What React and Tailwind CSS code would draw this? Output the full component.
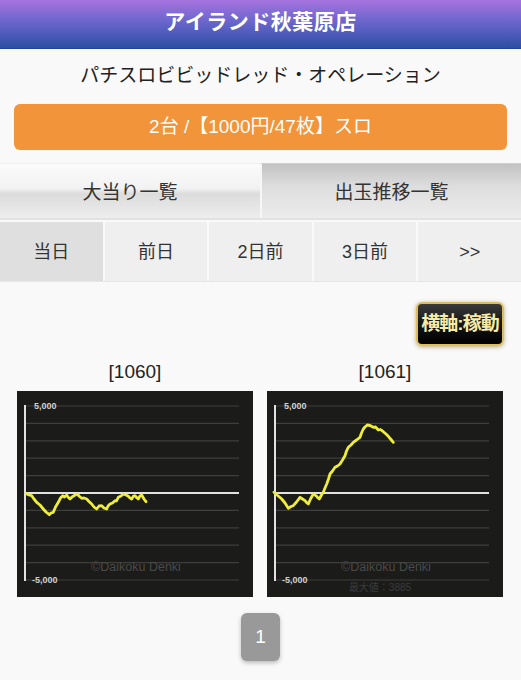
import React from "react";

const FONT = { fontFamily: '"Liberation Sans", "Noto Sans CJK JP", sans-serif' };

const leftPts = [
  [9, 102.5], [12, 104], [14.7, 104.7], [17, 108], [19.7, 111.3], [23, 114], [26.3, 118], [29, 121], [32.3, 123.7],
  [34, 122], [36.3, 121.3], [38.5, 116], [41.3, 111.3], [43.5, 107], [45.7, 104.7], [47.5, 106], [49.7, 104],
  [51, 106], [53, 108], [55, 106], [57, 104.7], [59, 103.5], [60.3, 103], [62, 105], [64.7, 107.3], [67, 107],
  [69.7, 108], [72, 110.5], [74.7, 113], [77, 116], [79.7, 118], [82, 115], [84.7, 114.7], [87, 117], [89.7, 118],
  [91, 115], [93, 113], [95.5, 112], [98, 109.7], [99.5, 110], [101.3, 106.3], [104, 105], [106.3, 103],
  [109, 104], [111.3, 105.3], [113, 107], [114.7, 108], [116.5, 105], [118, 104.7], [120, 107], [121.3, 108],
  [123, 105], [124.7, 104], [127, 108], [129, 110.7],
];

const rightPts = [
  [7, 101.3], [10, 104], [12.5, 106], [14.7, 108], [18, 112], [21.3, 117.3], [24, 115.5], [26.3, 114.7],
  [29.5, 111], [33, 106.3], [35.5, 108], [38, 109.7], [40, 112], [41.3, 113], [43.5, 108], [46.3, 103],
  [48, 104], [49.7, 105.3], [51, 107], [52.3, 108], [54.5, 104], [56.3, 101.3], [58, 97], [59.7, 93],
  [61.5, 88], [63, 83], [65.5, 80], [68, 76.3], [70.5, 75], [73, 73], [75.5, 69], [78, 64.7], [79.5, 60],
  [81.3, 56.3], [84, 54], [86.3, 51.3], [89.5, 49], [93, 46.3], [94.5, 42], [96.3, 38], [98, 36], [100.3, 34],
  [103, 34.5], [106.3, 36.3], [108.5, 36], [111.3, 39], [113.5, 38.5], [116.3, 40.7], [119, 43], [121.3, 45.3],
  [124, 48.5], [126.3, 51.3],
];

function toPath(pts) {
  return pts.map((p, i) => `${i === 0 ? "M" : "L"}${p[0]},${p[1]}`).join(" ");
}

function Chart({ pts, showMax }) {
  const gridYs = [];
  for (let i = 0; i <= 10; i++) gridYs.push(15 + i * 17.4);
  return (
    <svg width="236" height="206" viewBox="0 0 236 206" className="block">
      <rect x="0" y="0" width="236" height="206" fill="#1b1b1a" />
      {gridYs.map((y, i) =>
        i === 5 ? null : (
          <line key={i} x1="8" x2="222" y1={y} y2={y} stroke="#3e3e3c" strokeWidth="1.2" />
        )
      )}
      <line x1="8" x2="222" y1="102" y2="102" stroke="#e2e2e2" strokeWidth="2" />
      <line x1="8" x2="8" y1="14" y2="190" stroke="#e2e2e2" strokeWidth="2" />
      <text x="17" y="18" fontSize="9" fill="#d0d0d0" fontWeight="bold" style={FONT}>5,000</text>
      <text x="15" y="192" fontSize="9" fill="#d0d0d0" fontWeight="bold" style={FONT}>-5,000</text>
      <text x="119" y="180" fontSize="12.5" fill="#4a4a48" textAnchor="middle" style={FONT}>©Daikoku Denki</text>
      {showMax && (
        <text x="113" y="200" fontSize="10" fill="#3c3c3a" textAnchor="middle" style={FONT}>最大値：3885</text>
      )}
      <path d={toPath(pts)} fill="none" stroke="#eeee3a" strokeWidth="2.8" strokeLinejoin="round" strokeLinecap="round" />
    </svg>
  );
}

const days = ["当日", "前日", "2日前", "3日前", ">>"];

export default function App() {
  return (
    <div className="w-[521px] h-[680px] bg-[#f9f9f9] overflow-hidden" style={FONT}>
      <div className="h-[49px] flex items-center justify-center bg-[linear-gradient(to_bottom,#a673de_0%,#6a66cc_45%,#2b4fa3_100%)] border-b border-[#1f4390]">
        <span className="text-white font-bold text-[21px] tracking-[0.5px] pb-[5px]">アイランド秋葉原店</span>
      </div>
      <div className="h-[55px] flex items-center justify-center">
        <span className="text-[#222] text-[19px]">パチスロビビッドレッド・オペレーション</span>
      </div>
      <div className="mx-[14px] h-[46px] rounded-[6px] bg-[#f1943a] flex items-center justify-center">
        <span className="text-white text-[19px]">2台 /【1000円/47枚】スロ</span>
      </div>
      <div className="mt-[13px] h-[57px] flex border-b-2 border-[#e2e2e2]">
        <div className="w-[260px] flex items-center justify-center pt-[4px] bg-[linear-gradient(to_bottom,#fbfbfb_0%,#f2f2f2_45%,#dcdcdc_55%,#ededed_100%)] border-t border-[#efefef]">
          <span className="text-[#333] text-[19px]">大当り一覧</span>
        </div>
        <div className="flex-1 flex items-center justify-center pt-[4px] bg-[linear-gradient(to_bottom,#c2c2c2_0%,#dddddd_40%,#ececec_100%)] border-l-2 border-[#f7f7f7] border-t border-t-[#d0d0d0]">
          <span className="text-[#333] text-[19px]">出玉推移一覧</span>
        </div>
      </div>
      <div className="mt-[2px] h-[60px] flex border-b border-[#e6e6e6]">
        {days.map((d, i) => (
          <div
            key={d}
            className={`flex-1 flex items-center justify-center pt-[2px] ${i === 0 ? "bg-[#dfdfdf]" : "bg-[#efefef]"} ${i < 4 ? "border-r-2 border-[#f9f9f9]" : ""}`}
          >
            <span className="text-[#333] text-[18px]">{d}</span>
          </div>
        ))}
      </div>
      <div className="flex justify-end pr-[17px] pt-[20px]">
        <div className="w-[88px] h-[44px] rounded-[6px] border-2 border-[#dcbd5c] bg-[linear-gradient(to_bottom,#3a3a3a_0%,#151515_50%,#000_100%)] shadow-[0_1px_4px_rgba(120,90,0,0.5)] flex items-center justify-center">
          <span className="text-[#f8eba8] font-bold text-[19px] tracking-[-1px]">横軸:稼動</span>
        </div>
      </div>
      <div className="flex pl-[17px] gap-[14px] mt-[13px]">
        <div className="flex flex-col items-center">
          <div className="text-[#222] text-[19px] h-[32px] leading-[26px]">[1060]</div>
          <Chart pts={leftPts} />
        </div>
        <div className="flex flex-col items-center">
          <div className="text-[#222] text-[19px] h-[32px] leading-[26px]">[1061]</div>
          <Chart pts={rightPts} showMax />
        </div>
      </div>
      <div className="flex justify-center mt-[16px]">
        <div className="w-[39px] h-[48px] rounded-[6px] bg-[#999] shadow-[0_2px_4px_rgba(0,0,0,0.25)] flex items-center justify-center">
          <span className="text-white text-[19px]">1</span>
        </div>
      </div>
    </div>
  );
}
